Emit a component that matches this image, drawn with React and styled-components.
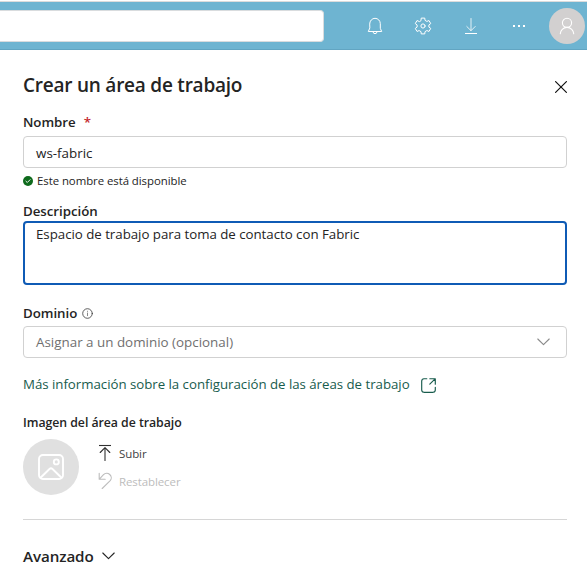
import React from "react";
import styled, { createGlobalStyle } from "styled-components";

const GlobalStyle = createGlobalStyle`
  *, *::before, *::after { box-sizing: border-box; }
  body {
    margin: 0;
    background: #fff;
    color: #242424;
    font-family: "Open Sans", "Noto Sans", sans-serif;
    overflow: hidden;
  }
  svg { display: block; flex: none; }
  button { font: inherit; color: inherit; background: none; border: 0; padding: 0; text-align: left; }
`;

const Page = styled.div`
  height: 580px;
  padding-top: 1px;
`;

const TopBar = styled.header`
  display: flex;
  align-items: center;
  height: 49px;
  padding-right: 2px;
  background: #6eb4d1;
  border-top: 1px solid #dcdcdc;
  border-bottom: 1px solid #62a5c2;
`;

const SearchBox = styled.div`
  width: 324px;
  height: 32px;
  margin-right: auto;
  background: #fff;
  border: 1px solid #d9dcde;
  border-left: 0;
  border-radius: 0 4px 4px 0;
`;

const Actions = styled.nav`
  display: flex;
  align-items: center;
  margin-right: 6px;
`;

const IconButton = styled.button`
  display: grid;
  place-items: center;
  width: 48px;
  height: 46px;
`;

const Avatar = styled.div`
  display: grid;
  place-items: center;
  width: 36px;
  height: 36px;
  border-radius: 50%;
  background: #d2d0d0;
`;

const Panel = styled.main`
  display: flex;
  flex-direction: column;
  padding: 21px 20px 0 23px;
`;

const TitleRow = styled.div`
  display: flex;
  align-items: center;
  justify-content: space-between;
  height: 28px;
  margin-bottom: 13px;
`;

const Title = styled.h1`
  margin: 0;
  font-size: 19px;
  font-weight: 600;
  line-height: 28px;
  letter-spacing: -0.23px;
`;

const CloseButton = styled.button`
  padding-top: 4px;
`;

const Label = styled.label`
  display: flex;
  align-items: center;
  gap: ${(p) => p.$gap || 0}px;
  font-size: ${(p) => p.$size || 13.3}px;
  font-weight: 600;
  letter-spacing: -0.04px;
  line-height: 20px;
  height: 20px;
`;

const Required = styled.span`
  color: #c4262e;
`;

const Field = styled.div`
  display: flex;
  align-items: center;
  justify-content: space-between;
  height: 32px;
  margin-top: ${(p) => p.$top}px;
  padding: ${(p) => p.$drop || 0}px 16px 0 12px;
  border: 1px solid #d1d1d1;
  border-radius: 4px;
  color: ${(p) => (p.$placeholder ? "#707070" : "#242424")};
  font-size: 13.4px;
  line-height: 20px;
`;

const Status = styled.div`
  display: flex;
  align-items: center;
  gap: 4px;
  height: 16px;
  margin: 5px 0 12px;
  font-size: 11.4px;
  letter-spacing: -0.05px;
  line-height: 16px;
`;

const TextArea = styled.div`
  height: 64px;
  margin-bottom: 18px;
  padding: 1px 11px;
  border: 2px solid #0f5bb5;
  border-radius: 4px;
  font-size: 13.3px;
  letter-spacing: -0.03px;
  line-height: 20px;
`;

const MoreLink = styled.a`
  display: flex;
  gap: 11px;
  height: 20px;
  margin: 16px 0 19px;
  color: #185c4d;
  font-size: 13.28px;
  letter-spacing: -0.025px;
  line-height: 20px;
  svg { margin-top: 4px; }
`;

const ImageRow = styled.div`
  display: flex;
  gap: 19px;
  margin-top: 6px;
`;

const Thumbnail = styled.div`
  display: grid;
  place-items: center;
  width: 56px;
  height: 56px;
  border-radius: 50%;
  background: #e0e0e0;
`;

const ImageActions = styled.div`
  display: flex;
  flex-direction: column;
`;

const ImageAction = styled.button`
  display: flex;
  align-items: center;
  gap: 7px;
  height: 28px;
  color: ${(p) => (p.$disabled ? "#bdbdbd" : "#424242")};
  font-size: 11.5px;
  letter-spacing: -0.1px;
  line-height: 28px;
`;

const ActionText = styled.span`
  padding-top: 2px;
`;

const Divider = styled.hr`
  width: 100%;
  height: 1px;
  margin: 24px 0;
  border: 0;
  background: #d6d6d6;
`;

const Advanced = styled.button`
  display: flex;
  align-items: center;
  gap: 8px;
  height: 24px;
  font-size: 15.2px;
  font-weight: 600;
  letter-spacing: -0.1px;
  line-height: 24px;
`;

const Glyph = ({ w, h, color = "#fff", stroke = 1, children }) => (
  <svg
    width={w}
    height={h}
    viewBox={`0 0 ${w} ${h}`}
    fill="none"
    stroke={color}
    strokeWidth={stroke}
    strokeLinecap="round"
    strokeLinejoin="round"
  >
    {children}
  </svg>
);

const BellIcon = () => (
  <Glyph w={16} h={18}>
    <path d="M2.7 6.7a5.3 5.4 0 0 1 10.6 0v4.6l1.4 3.2H1.3l1.4-3.2z" />
    <path d="M6 14.8a2 1.9 0 0 0 4 0" />
  </Glyph>
);

// Six-tooth gear outline centred in an 18px box.
const gearPath = (() => {
  const points = [];
  for (let i = 0; i < 6; i += 1) {
    const a = (i * Math.PI) / 3;
    [[-0.34, 6], [-0.22, 8.1], [0.22, 8.1], [0.34, 6]].forEach(([d, r]) => {
      points.push(`${(9 + r * Math.sin(a + d)).toFixed(2)} ${(9 - r * Math.cos(a + d)).toFixed(2)}`);
    });
  }
  return `M${points.join("L")}Z`;
})();

const GearIcon = () => (
  <Glyph w={18} h={18}>
    <path d={gearPath} />
    <circle cx="9" cy="9" r="2.1" />
  </Glyph>
);

const DownloadIcon = () => (
  <Glyph w={14} h={18}>
    <path d="M7 1.5v12M2.8 9.5 7 13.7l4.2-4.2" strokeOpacity="0.8" />
    <path d="M1 16.5h12" strokeLinecap="butt" />
  </Glyph>
);

const MoreIcon = () => (
  <Glyph w={14} h={4}>
    <path d="M1 2h2M6 2h2M11 2h2" strokeWidth="2" strokeLinecap="butt" />
  </Glyph>
);

const PersonIcon = () => (
  <Glyph w={16} h={18} stroke={1.1}>
    <circle cx="8" cy="5.8" r="4.6" />
    <path d="M1.3 16.8a6.7 6.4 0 0 1 13.4 0" />
  </Glyph>
);

const CloseIcon = () => (
  <Glyph w={12} h={12} color="#111" stroke={1.2}>
    <path d="m.6.6 10.8 10.8M11.4.6.6 11.4" />
  </Glyph>
);

const CheckIcon = () => (
  <Glyph w={10} h={10}>
    <circle cx="5" cy="5" r="5" fill="#0e6a1c" stroke="none" />
    <path d="m2.9 5.2 1.4 1.3 2.8-2.8" strokeWidth="0.9" />
  </Glyph>
);

const InfoIcon = () => (
  <Glyph w={11} h={11} color="#424242" stroke={0.85}>
    <circle cx="5.5" cy="5.5" r="4.8" />
    <path d="M5.5 5v2.7M5.5 3.2v.2" strokeOpacity="0.75" />
  </Glyph>
);

const ChevronIcon = ({ color }) => (
  <Glyph w={13} h={8} color={color} stroke={1.1}>
    <path d="m.8 1 5.7 5.7L12.2 1" />
  </Glyph>
);

const OpenIcon = () => (
  <Glyph w={15} h={15} color="#185c4d" stroke={1.15}>
    <path d="M5.8.7H3A2.4 2.4 0 0 0 .7 3v9A2.4 2.4 0 0 0 3 14.3h9a2.4 2.4 0 0 0 2.3-2.3V9.2M8.8.7h5.5v5.5M14.1.9 8.8 6.2" />
  </Glyph>
);

const ImageIcon = () => (
  <Glyph w={28} h={28} stroke={1.9}>
    <rect x="2" y="2" width="24" height="24" rx="4" />
    <circle cx="19.3" cy="8.9" r="2.5" />
    <path d="m3.5 24.7 9-8.7a2.2 2.2 0 0 1 3 0l9 8.7" />
  </Glyph>
);

const UploadIcon = () => (
  <Glyph w={14} h={18} color="#303030" stroke={1.1}>
    <path d="M1 1.5h12" strokeLinecap="butt" />
    <path d="M7 16.5V3.7M2.2 8.5 7 3.7l4.8 4.8" />
  </Glyph>
);

const ResetIcon = () => (
  <Glyph w={14} h={18} color="#bdbdbd" stroke={1.1}>
    <path d="M1.2 1.3v6h6M1.4 7.1l4.1-4.4a4.5 4.5 0 0 1 6.7 6L4.2 16.5" />
  </Glyph>
);

export default function App() {
  return (
    <Page>
      <GlobalStyle />
      <TopBar>
        <SearchBox />
        <Actions>
          <IconButton aria-label="Notificaciones"><BellIcon /></IconButton>
          <IconButton aria-label="Configuración"><GearIcon /></IconButton>
          <IconButton aria-label="Descargar"><DownloadIcon /></IconButton>
          <IconButton aria-label="Más"><MoreIcon /></IconButton>
        </Actions>
        <Avatar><PersonIcon /></Avatar>
      </TopBar>
      <Panel>
        <TitleRow>
          <Title>Crear un área de trabajo</Title>
          <CloseButton aria-label="Cerrar"><CloseIcon /></CloseButton>
        </TitleRow>

        <Label $gap={8}>Nombre <Required>*</Required></Label>
        <Field $top={4} $drop={1}>ws-fabric</Field>
        <Status><CheckIcon />Este nombre está disponible</Status>

        <Label>Descripción</Label>
        <TextArea>Espacio de trabajo para toma de contacto con Fabric</TextArea>

        <Label $gap={5}>Dominio <InfoIcon /></Label>
        <Field $top={3} $placeholder>
          Asignar a un dominio (opcional)
          <ChevronIcon color="#8a8a8a" />
        </Field>
        <MoreLink>
          Más información sobre la configuración de las áreas de trabajo
          <OpenIcon />
        </MoreLink>

        <Label $size={12.3}>Imagen del área de trabajo</Label>
        <ImageRow>
          <Thumbnail><ImageIcon /></Thumbnail>
          <ImageActions>
            <ImageAction><UploadIcon /><ActionText>Subir</ActionText></ImageAction>
            <ImageAction $disabled><ResetIcon /><ActionText>Restablecer</ActionText></ImageAction>
          </ImageActions>
        </ImageRow>

        <Divider />
        <Advanced>Avanzado <ChevronIcon color="#242424" /></Advanced>
      </Panel>
    </Page>
  );
}
